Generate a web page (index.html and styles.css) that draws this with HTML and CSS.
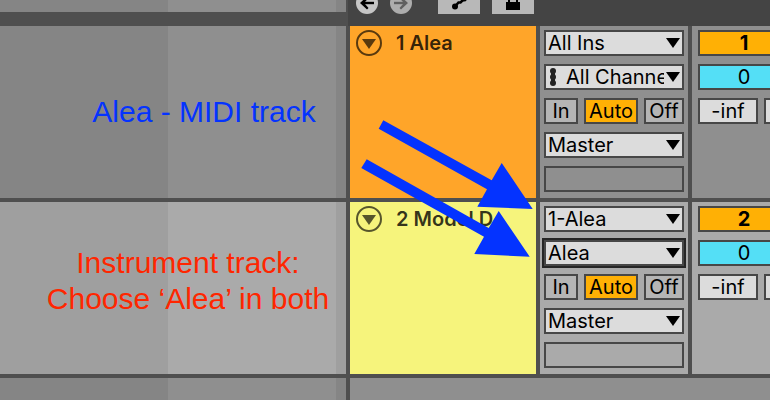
FILE: index.html
```html
<!DOCTYPE html>
<html lang="en">
<head>
<meta charset="utf-8">
<title>Alea routing</title>
<link rel="stylesheet" href="styles.css">
</head>
<body>
<main class="app">
  <header class="row header">
    <div class="ruler"></div>
    <div class="toolbar">
      <button class="round" aria-label="Previous locator"><svg width="22" height="22" viewBox="0 0 22 22"><path d="M18 11H9" stroke="#000" stroke-width="2.4"/><path d="M4 11l7-6.5 1.5 1.5-3.5 4v2l3.500 4-1.500 1.500z"/></svg></button>
      <button class="round dim" aria-label="Next locator"><svg width="22" height="22" viewBox="0 0 22 22"><path d="M4 11h9" stroke="#606060" stroke-width="2.4"/><path d="M18 11l-7-6.500-1.500 1.500 3.500 4v2l-3.500 4 1.500 1.500z" fill="#606060"/></svg></button>
      <button class="tool first" aria-label="Automation mode"><svg width="42" height="26" viewBox="0 0 42 26"><path d="M17 18.500L20.500 14.500H22.500L26 11" fill="none" stroke="#000" stroke-width="2.6"/><circle cx="17" cy="18.500" r="3"/><circle cx="26" cy="10.500" r="3"/></svg></button>
      <button class="tool" aria-label="Lock envelopes"><svg width="42" height="26" viewBox="0 0 42 26"><path d="M14 14h14v8H14z"/><path d="M17 15v-5a4 4 0 0 1 8 0v5" fill="none" stroke="#000" stroke-width="2"/></svg></button>
    </div>
  </header>

  <section class="row track midi">
    <div class="lane"><p class="note blue">Alea - MIDI track</p></div>
    <div class="title orange">
      <button class="fold" aria-label="Fold track 1"></button>
      <h2>1 Alea</h2>
      <svg class="arrows" viewBox="350 26 186 240" aria-hidden="true">
        <path d="M383.3 120.3L491.7 180.3 501.7 163 532.7 209 477.3 206.7 487 189.3 378.7 128.7z"/>
        <path d="M366.7 159.3L488.7 228 498.7 211 529.7 256.7 474.3 254 484 236.7 361.3 168z"/>
      </svg>
    </div>
    <div class="io">
      <div class="pick"><select aria-label="Input type"><option>All Ins</option></select></div>
      <div class="pick port"><svg class="dots" width="6" height="18" viewBox="0 0 6 18" aria-hidden="true"><path d="M1 2h4v14H1z"/><circle cx="3" cy="3" r="3"/><circle cx="3" cy="9" r="3"/><circle cx="3" cy="15" r="3"/></svg><select aria-label="Input channel"><option>All Channels</option></select></div>
      <div class="monitor"><button>In</button><button class="on">Auto</button><button>Off</button></div>
      <div class="pick"><select aria-label="Output type"><option>Master</option></select></div>
      <div class="empty"></div>
    </div>
    <div class="mixer">
      <button class="number">1</button>
      <input class="pan" aria-label="Pan 1" value="0">
      <div class="levels"><input aria-label="Volume 1" value="-inf"><input aria-label="Send 1" value=""></div>
    </div>
  </section>

  <section class="row track instrument">
    <div class="lane"><p class="note red">Instrument track:<br>Choose ‘Alea’ in both</p></div>
    <div class="title yellow">
      <button class="fold" aria-label="Fold track 2"></button>
      <h2>2 Model D</h2>
    </div>
    <div class="io">
      <div class="pick"><select aria-label="Input type"><option>1-Alea</option></select></div>
      <div class="pick selected"><select aria-label="Input channel"><option>Alea</option></select></div>
      <div class="monitor"><button>In</button><button class="on">Auto</button><button>Off</button></div>
      <div class="pick"><select aria-label="Output type"><option>Master</option></select></div>
      <div class="empty"></div>
    </div>
    <div class="mixer">
      <button class="number">2</button>
      <input class="pan" aria-label="Pan 2" value="0">
      <div class="levels"><input aria-label="Volume 2" value="-inf"><input aria-label="Send 2" value=""></div>
    </div>
  </section>

  <div class="row footer">
    <div class="lane"></div>
    <div class="drop"></div>
  </div>
</main>
</body>
</html>
```
FILE: styles.css
```css
* { box-sizing: border-box; }

body {
  margin: 0;
  background: #4f4f4f;
  color: #000;
  font: 20px/22px Inter, "Liberation Sans", sans-serif;
}

h2, p { margin: 0; }

button, input, select {
  margin: 0;
  padding: 0;
  border: 2px solid #474747;
  border-radius: 0;
  background: #dcdcdc;
  color: #000;
  font: inherit;
}

.app {
  --dark: #858585;
  --light: #8f8f8f;
  display: flex;
  flex-direction: column;
  gap: 4px;
  min-height: 100vh;
  overflow: hidden;
}

.row {
  display: grid;
  grid-template-columns: minmax(0, 346fr) 186px 148px minmax(0, 78fr);
  gap: 4px;
}

.instrument { --dark: #9f9f9f; --light: #aaaaaa; }

.lane, .ruler {
  background: repeating-linear-gradient(90deg, var(--dark) 0 168px, var(--light) 168px 336px);
}

/* toolbar strip, scrolled partly out of view */
.header { height: 26px; margin-bottom: -4px; }
.ruler { height: 12px; }

.toolbar {
  grid-column: 2 / -1;
  display: flex;
  align-items: flex-end;
  gap: 12px;
  height: 26px;
  margin-left: -2px;
  padding: 0 8px 12px;
  overflow: hidden;
  background: #444;
}

.toolbar button { flex: none; border: 0; background: #b8b8b8; }
.toolbar svg { display: block; }
.toolbar .round { border-radius: 50%; background: #c6c6c6; }
.toolbar .dim { background: #adadad; }
.toolbar .first { margin-left: 14px; }

.lane {
  display: flex;
  align-items: center;
  justify-content: center;
}

.note {
  font: 30px/36px "Liberation Sans", Arial, sans-serif;
  text-align: center;
  white-space: nowrap;
}
.blue { padding-left: 62px; color: #0433ff; }
.red { padding: 0 0 14px 30px; color: #ff2600; }

.title {
  position: relative;
  display: flex;
  align-items: flex-start;
  gap: 14px;
  padding: 4px 6px;
}
.orange { background: #ffa529; }
.yellow { background: #f6f47c; }

.title h2 {
  font-size: 20px;
  line-height: 26px;
  font-weight: 600;
  color: rgba(0, 0, 0, 0.8);
  white-space: nowrap;
}

.fold {
  display: grid;
  place-items: center;
  width: 26px;
  height: 26px;
  border: 2px solid rgba(0, 0, 0, 0.65);
  border-radius: 50%;
  background: none;
}
.fold::before {
  content: "";
  width: 14px;
  height: 10px;
  margin-top: 2px;
  background: rgba(0, 0, 0, 0.65);
  clip-path: polygon(0 0, 100% 0, 50% 100%);
}

.arrows {
  position: absolute;
  z-index: 1;
  top: 0;
  left: 0;
  width: 186px;
  height: 240px;
  overflow: visible;
  fill: #0433ff;
  pointer-events: none;
}

.io, .mixer {
  display: flex;
  flex-direction: column;
  gap: 8px;
  padding: 4px 4px 6px;
  background: var(--light);
}

.pick { position: relative; height: 26px; }
.pick select {
  display: block;
  width: 100%;
  height: 26px;
  padding: 0 18px 0 2px;
  appearance: none;
  text-overflow: clip;
}
.pick::after {
  content: "";
  position: absolute;
  top: 8px;
  right: 4px;
  width: 14px;
  height: 10px;
  background: #000;
  clip-path: polygon(0 0, 100% 0, 50% 100%);
  pointer-events: none;
}
.port select { padding-left: 20px; }
.dots { position: absolute; top: 4px; left: 6px; fill: #222; }
.selected { outline: 2px solid #262626; }

.monitor {
  display: grid;
  grid-template-columns: 34px 54px 40px;
  gap: 6px;
}
.monitor button { height: 26px; background: #b5b5b5; }
.monitor .on { background: #ffb005; }

.empty { height: 26px; border: 2px solid #474747; }

.mixer { padding-left: 6px; overflow: hidden; }
.mixer > * { flex: none; width: 92px; height: 26px; }
.mixer input { min-width: 0; text-align: center; }
.mixer .number { background: #ffb005; font-weight: 700; }
.mixer .pan { background: #54dff6; }
.levels { display: grid; grid-template-columns: 60px 26px; gap: 6px; }

.footer { flex: 1; min-height: 22px; }
.drop { grid-column: 2 / -1; background: var(--light); }
```
